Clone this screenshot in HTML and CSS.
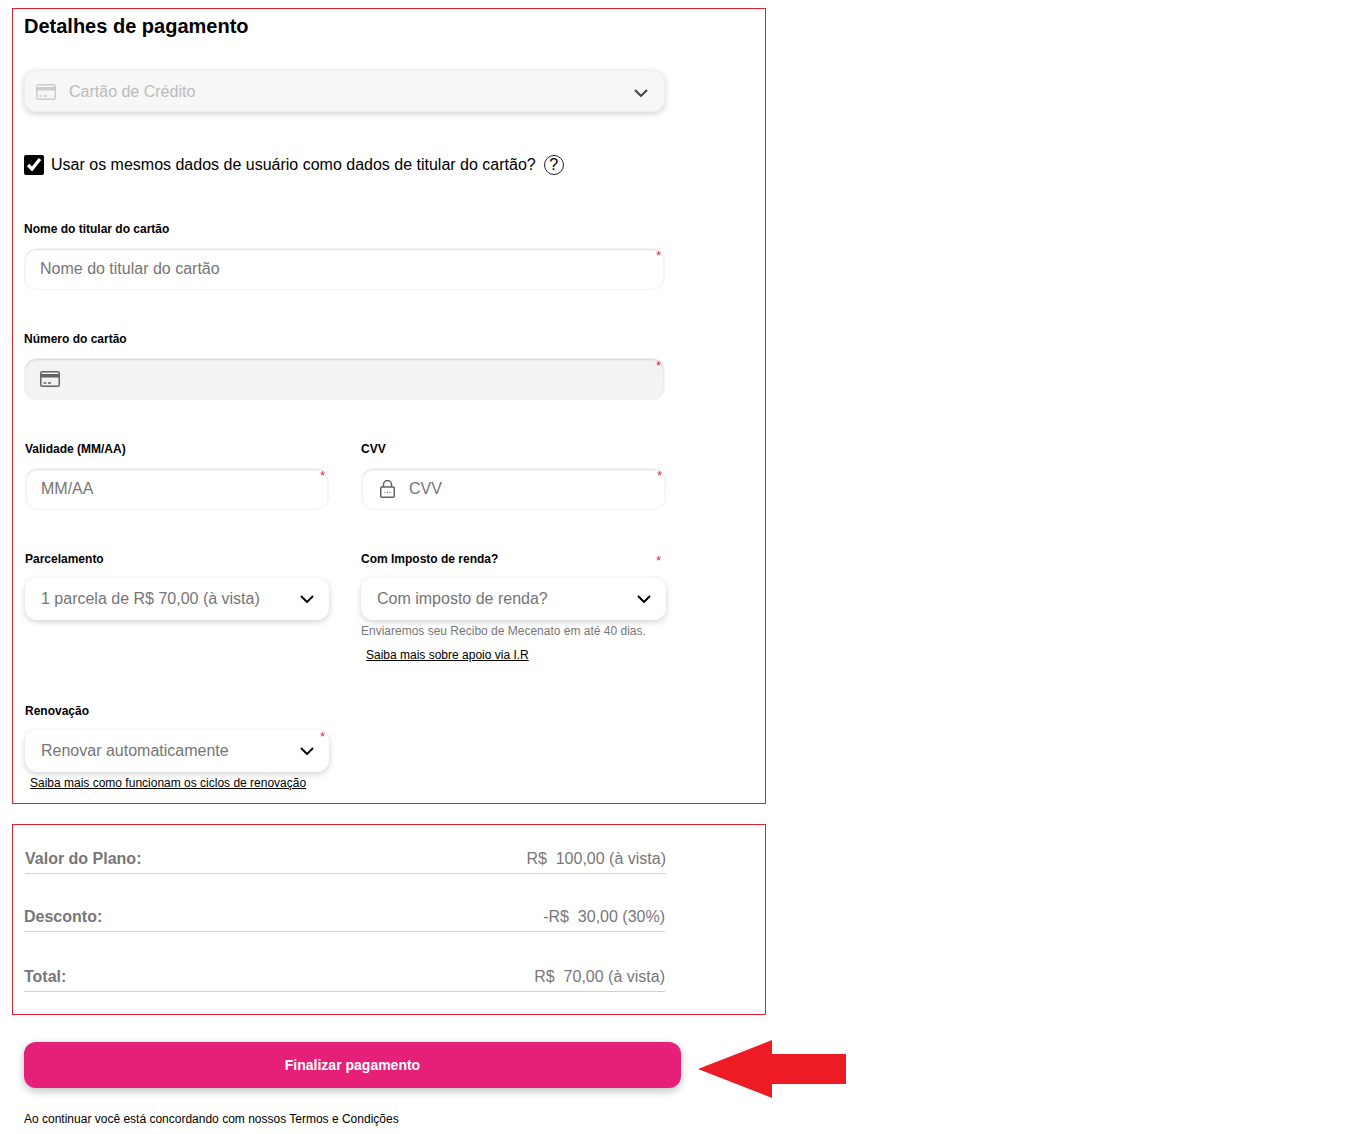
FILE: index.html
```html
<!DOCTYPE html>
<html lang="pt-BR">
<head>
    <meta charset="UTF-8">
    <meta name="viewport" content="width=device-width, initial-scale=1.0">
    <title>Detalhes de pagamento</title>
    <link rel="stylesheet" href="styles.css">
</head>
<body>
    <section class="box payment-box">
        <h1>Detalhes de pagamento</h1>

        <div class="select select-disabled method-select">
            <svg class="card-icon" viewBox="0 0 20 16"><rect x="0.75" y="0.75" width="18.5" height="14.5" rx="1.5" fill="none" stroke="currentColor" stroke-width="1.5"/><rect x="1" y="3" width="18" height="3.5" fill="currentColor"/><path d="M3.5 12h3M8 12h3" stroke="currentColor" stroke-width="1.5"/></svg>
            <span class="select-text">Cartão de Crédito</span>
            <svg class="chevron" viewBox="0 0 14 8"><path d="M1 1l6 6 6-6" fill="none" stroke="currentColor" stroke-width="2"/></svg>
        </div>

        <div class="same-data">
            <input type="checkbox" class="check" checked>
            <span>Usar os mesmos dados de usuário como dados de titular do cartão?</span>
            <span class="help">?</span>
        </div>

        <div class="field">
            <label>Nome do titular do cartão</label>
            <div class="input-wrap">
                <input type="text" class="input" placeholder="Nome do titular do cartão">
                <span class="req">*</span>
            </div>
        </div>

        <div class="field">
            <label>Número do cartão</label>
            <div class="input-wrap input-wrap-gray">
                <svg class="card-icon card-icon-dark" viewBox="0 0 20 16"><rect x="0.75" y="0.75" width="18.5" height="14.5" rx="1.5" fill="none" stroke="currentColor" stroke-width="1.5"/><rect x="1" y="3" width="18" height="3.5" fill="currentColor"/><path d="M3.5 12h3M8 12h3" stroke="currentColor" stroke-width="1.5"/></svg>
                <span class="req">*</span>
            </div>
        </div>

        <div class="columns">
            <div class="field">
                <label>Validade (MM/AA)</label>
                <div class="input-wrap">
                    <input type="text" class="input" placeholder="MM/AA">
                    <span class="req">*</span>
                </div>
            </div>
            <div class="field">
                <label>CVV</label>
                <div class="input-wrap">
                    <svg class="lock-icon" viewBox="0 0 15 18"><path d="M3.5 7V4.5a4 4 0 0 1 8 0V7" fill="none" stroke="currentColor" stroke-width="1.5"/><rect x="0.75" y="7" width="13.5" height="10.25" rx="1" fill="none" stroke="currentColor" stroke-width="1.5"/><path d="M4.5 12.5h1M7 12.5h1M9.5 12.5h1" stroke="currentColor" stroke-width="1.2"/></svg>
                    <input type="text" class="input input-cvv" placeholder="CVV">
                    <span class="req">*</span>
                </div>
            </div>
        </div>

        <div class="columns columns-last">
            <div class="field">
                <label>Parcelamento</label>
                <div class="select">
                    <span class="select-text">1 parcela de R$ 70,00 (à vista)</span>
                    <svg class="chevron" viewBox="0 0 14 8"><path d="M1 1l6 6 6-6" fill="none" stroke="currentColor" stroke-width="2"/></svg>
                </div>
            </div>
            <div class="field">
                <label class="label-req">Com Imposto de renda? <span class="req-inline">*</span></label>
                <div class="select">
                    <span class="select-text">Com imposto de renda?</span>
                    <svg class="chevron" viewBox="0 0 14 8"><path d="M1 1l6 6 6-6" fill="none" stroke="currentColor" stroke-width="2"/></svg>
                </div>
                <p class="hint">Enviaremos seu Recibo de Mecenato em até 40 dias.</p>
                <a class="link link-ir" href="#">Saiba mais sobre apoio via I.R</a>
            </div>
        </div>

        <div class="field renew">
            <label>Renovação</label>
            <div class="select">
                <span class="select-text">Renovar automaticamente</span>
                <svg class="chevron" viewBox="0 0 14 8"><path d="M1 1l6 6 6-6" fill="none" stroke="currentColor" stroke-width="2"/></svg>
                <span class="req">*</span>
            </div>
            <a class="link link-renew" href="#">Saiba mais como funcionam os ciclos de renovação</a>
        </div>
    </section>

    <section class="box summary-box">
        <div class="summary-row summary-row-first"><strong>Valor do Plano:</strong><span>R$&nbsp; 100,00 (à vista)</span></div>
        <div class="summary-row"><strong>Desconto:</strong><span>-R$&nbsp; 30,00 (30%)</span></div>
        <div class="summary-row summary-row-total"><strong>Total:</strong><span>R$&nbsp; 70,00 (à vista)</span></div>
    </section>

    <div class="pay">
        <button class="pay-btn">Finalizar pagamento</button>
        <svg class="arrow" viewBox="0 0 150 58"><path d="M2 29L76 0V14H150V44H76V58Z" fill="#ed1c24"/></svg>
    </div>

    <p class="terms">Ao continuar você está concordando com nossos Termos e Condições</p>
</body>
</html>
```

FILE: styles.css
```css
* {
    box-sizing: border-box;
}

body {
    font-family: "Liberation Sans", Arial, sans-serif;
    margin: 0;
    background-color: #fff;
    color: #000;
}

.box {
    width: 754px;
    margin-left: 12px;
    border: 1px solid #e3202d;
}

.payment-box {
    margin-top: 8px;
    height: 796px;
    padding: 5px 0 0 11px;
}

h1 {
    margin: 0 0 32px;
    font-size: 20px;
    line-height: 24px;
    font-weight: bold;
}

.select {
    position: relative;
    display: flex;
    align-items: center;
    height: 42px;
    padding: 0 15px 0 16px;
    border-radius: 12px;
    background: #fff;
    box-shadow: 0 2px 6px rgba(0, 0, 0, 0.18);
    color: #757575;
    font-size: 16px;
}

.select-text {
    flex: 1;
}

.method-select {
    width: 641px;
}

.select-disabled {
    padding: 2px 16px 0 11px;
    background: #f7f7f7;
    border: 1px solid #efefef;
    color: #bbb;
}

.select-disabled .chevron {
    margin-top: 1px;
    color: #444;
}

.chevron {
    width: 14px;
    height: 8px;
    color: #000;
    flex: none;
}

.card-icon {
    width: 20px;
    height: 16px;
    margin-right: 13px;
    flex: none;
    color: #ccc;
}

.card-icon-dark {
    margin: 0;
    color: #5f6368;
}

.same-data {
    display: flex;
    align-items: center;
    height: 20px;
    margin-top: 43px;
    font-size: 16px;
}

.check {
    width: 20px;
    height: 20px;
    margin: 0 7px 0 0;
    accent-color: #000;
}

.help {
    width: 20px;
    height: 20px;
    margin-left: 8px;
    border: 1px solid #222;
    border-radius: 50%;
    text-align: center;
    line-height: 18px;
}

.field {
    margin-bottom: 41px;
}

.same-data + .field {
    margin-top: 46px;
}

.payment-box > .field {
    width: 641px;
}

label {
    display: block;
    height: 16px;
    margin-bottom: 11px;
    font-size: 12px;
    line-height: 16px;
    font-weight: bold;
}

.label-req {
    display: flex;
    justify-content: space-between;
    padding-right: 5px;
}

.req-inline,
.req {
    color: #e3202d;
    font-size: 12px;
    font-weight: normal;
}

.req-inline {
    padding-top: 2px;
}

.req {
    position: absolute;
    top: 0;
    right: 3px;
    line-height: 14px;
}

.select .req {
    right: 4px;
}

.input-wrap {
    position: relative;
    display: flex;
    align-items: center;
    height: 42px;
    border: 1px solid #f3f3f3;
    border-radius: 12px;
    background: #fff;
    box-shadow: inset 0 1px 2px rgba(0, 0, 0, 0.14);
}

.input-wrap-gray {
    padding-left: 15px;
    background: #f3f3f3;
}

.input {
    flex: 1;
    min-width: 0;
    height: 100%;
    padding: 0 15px;
    border: none;
    outline: none;
    background: transparent;
    font-family: "Liberation Sans", Arial, sans-serif;
    font-size: 16px;
}

.input::placeholder {
    color: #757575;
    opacity: 1;
}

.input-cvv {
    padding-left: 14px;
}

.lock-icon {
    width: 15px;
    height: 18px;
    margin-left: 18px;
    flex: none;
    color: #5f6368;
}

.columns {
    display: grid;
    grid-template-columns: 304px 305px;
    column-gap: 32px;
    margin-left: 1px;
}

.columns-last .field {
    margin-bottom: 0;
}

.columns-last {
    height: 152px;
}

.hint {
    margin: 3px 0 0;
    color: #777;
    font-size: 12px;
    line-height: 16px;
}

.link {
    display: block;
    color: #000;
    font-size: 12px;
    line-height: 16px;
    text-decoration: underline;
}

.link-ir {
    margin: 8px 0 0 5px;
}

.payment-box > .renew {
    width: 304px;
    margin: 0 0 0 1px;
}

.link-renew {
    margin: 3px 0 0 5px;
}

.summary-box {
    height: 191px;
    margin-top: 20px;
    padding: 25px 0 0 11px;
}

.summary-row {
    display: flex;
    justify-content: space-between;
    width: 641px;
    margin-top: 34px;
    padding-bottom: 5px;
    border-bottom: 1px solid #d2d2d2;
    color: #777;
    font-size: 16px;
    line-height: 18px;
}

.summary-row-first {
    margin-top: 0;
    margin-left: 1px;
}

.summary-row-total {
    margin-top: 36px;
}

.pay {
    position: relative;
    width: 657px;
    margin: 27px 0 0 24px;
}

.pay-btn {
    display: block;
    width: 100%;
    height: 46px;
    border: none;
    border-radius: 12px;
    background-color: #e61f78;
    box-shadow: 0 3px 8px rgba(0, 0, 0, 0.25);
    color: #fff;
    font-family: "Liberation Sans", Arial, sans-serif;
    font-size: 14px;
    font-weight: bold;
    cursor: pointer;
}

.arrow {
    position: absolute;
    top: -2px;
    left: 672px;
    width: 150px;
    height: 58px;
}

.terms {
    margin: 23px 0 0 24px;
    font-size: 12px;
    line-height: 16px;
}
```
